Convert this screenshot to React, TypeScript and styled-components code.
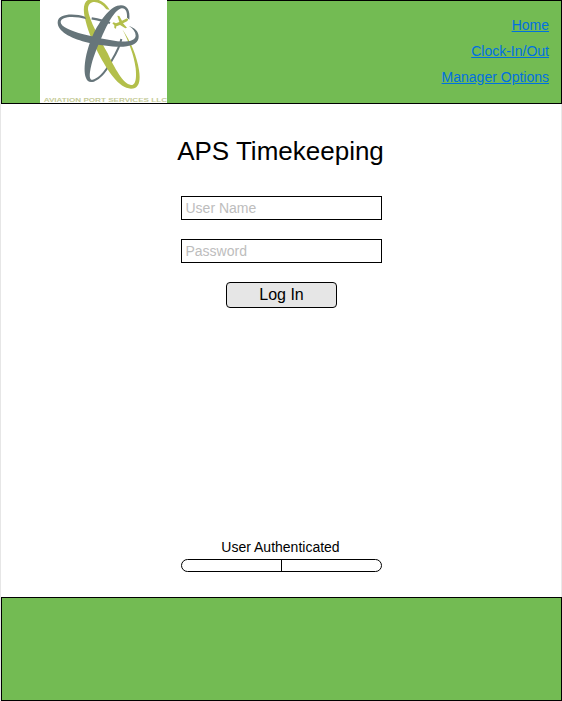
import React from "react";
import styled, { createGlobalStyle } from "styled-components";

const GlobalStyle = createGlobalStyle`
  * { box-sizing: border-box; }
  body {
    margin: 0;
    background: #fff;
    font-family: "Liberation Sans", Arial, sans-serif;
    color: #000;
    overflow: hidden;
  }
`;

const Page = styled.div`
  width: 562px;
  height: 701px;
  display: flex;
  flex-direction: column;
  border-left: 1px solid #e6e6e6;
`;

const Header = styled.header`
  height: 104px;
  flex: none;
  display: flex;
  justify-content: space-between;
  background: #73bb53;
  border: 1px solid #000;
`;

const LogoBox = styled.svg`
  display: block;
  width: 127px;
  height: 103px;
  margin: -1px 0 0 38px;
  background: #fff;
`;

const Nav = styled.nav`
  display: flex;
  flex-direction: column;
  align-items: flex-end;
  padding: 11px 12px 0 0;
`;

const NavLink = styled.a`
  font-size: 14px;
  line-height: 26px;
  color: #0070e0;
  text-decoration: underline;
`;

const Main = styled.main`
  flex: 1;
  display: flex;
  flex-direction: column;
  align-items: center;
  border-right: 1px solid #e9e9e9;
`;

const Title = styled.h1`
  margin: 32px 1px 0 0;
  font-size: 26px;
  line-height: 30px;
  font-weight: 400;
`;

const LoginForm = styled.form`
  display: flex;
  flex-direction: column;
  align-items: center;
  gap: 19px;
  margin: 30px 0 0 1px;
`;

const Field = styled.input`
  display: block;
  width: 201px;
  height: 24px;
  padding: 0 3.5px;
  border: 1px solid #000;
  border-radius: 0;
  background: #fff;
  font: 14px "Liberation Sans", Arial, sans-serif;
  outline: none;
  &::placeholder { color: #bdbdbd; opacity: 1; }
`;

const LoginButton = styled.button`
  width: 111px;
  height: 26px;
  padding: 0;
  border: 1px solid #000;
  border-radius: 4px;
  background: #e6e6e6;
  color: #000;
  font: 16px "Liberation Sans", Arial, sans-serif;
`;

const Status = styled.div`
  margin: auto 0 25px 1px;
  display: flex;
  flex-direction: column;
  align-items: center;
`;

const StatusText = styled.div`
  font-size: 14px;
  line-height: 16px;
  margin: 0 2px 4px 0;
`;

const Meter = styled.div`
  display: flex;
  width: 201px;
  height: 13px;
  border: 1px solid #000;
  border-radius: 7px;
`;

const MeterHalf = styled.div<{ $divided?: boolean }>`
  width: ${(p) => (p.$divided ? 100 : 99)}px;
  border-left: ${(p) => (p.$divided ? "1px solid #000" : "none")};
`;

const Footer = styled.footer`
  height: 104px;
  flex: none;
  background: #73bb53;
  border: 1px solid #000;
`;

function Logo() {
  return (
    <LogoBox viewBox="30 0 381 309" role="img" aria-label="Aviation Port Services LLC">
      {/* far side of the upright orbit, behind the green one */}
      <path
        fill="none"
        stroke="#66757a"
        strokeWidth="6"
        d="M184 243C203 241 226 217 244 184C259 159 270 139 274 117"
      />
      <path
        fill="#b3bf4b"
        d="M239 29C224 5 205 -5 183 -3C162 -1 158 23 164 51C171 83 183 117 205 160C232 211 267 266 303 266C328 266 332 242 327 210C321 170 302 124 277 88C296 124 312 166 317 205C320 235 317 256 303 255C280 253 253 203 233 160C209 115 177 60 174 29C173 -1 207 -1 229 28Z"
      />
      <path
        fill="#66757a"
        d="M165 50C138 41 84 38 83 67C82 93 121 115 166 126C213 137 249 141 280 140C311 138 327 127 326 108C325 93 315 84 296 77C310 86 317 95 317 107C316 123 293 126 262 124C225 119 195 112 160 103C121 92 92 80 92 66C92 48 135 47 168 57Z"
      />
      <path fill="none" stroke="#66757a" strokeWidth="7" d="M185 55C202 58 222 62 240 69" />
      <path
        fill="#66757a"
        d="M298 59C301 32 292 16 273 16C243 16 214 57 193 96C170 143 157 205 168 234C172 246 182 249 195 243L190 239C180 243 178 231 180 216C184 188 196 154 209 126C224 91 250 30 275 25C288 24 292 38 291 53Z"
      />
      <path
        fill="#b3bf4b"
        stroke="#fff"
        strokeWidth="2"
        paintOrder="stroke"
        d="M262 47L268 48L276 62L288 56C295 54 296 60 291 64L279 70L291 83L286 85L270 75L259 79L258 86L253 84L253 76L247 70L251 67L258 70L268 66Z"
      />
      <text
        x="41"
        y="305"
        textLength="370"
        lengthAdjust="spacingAndGlyphs"
        fontFamily="Liberation Sans, Arial, sans-serif"
        fontSize="17"
        fontWeight="700"
        fill="#c5cb98"
      >
        AVIATION PORT SERVICES LLC
      </text>
    </LogoBox>
  );
}

export default function App() {
  return (
    <>
      <GlobalStyle />
      <Page>
        <Header>
          <Logo />
          <Nav>
            <NavLink href="#home">Home</NavLink>
            <NavLink href="#clock">Clock-In/Out</NavLink>
            <NavLink href="#manager">Manager Options</NavLink>
          </Nav>
        </Header>
        <Main>
          <Title>APS Timekeeping</Title>
          <LoginForm>
            <Field type="text" placeholder="User Name" />
            <Field type="password" placeholder="Password" />
            <LoginButton type="button">Log In</LoginButton>
          </LoginForm>
          <Status>
            <StatusText>User Authenticated</StatusText>
            <Meter>
              <MeterHalf />
              <MeterHalf $divided />
            </Meter>
          </Status>
        </Main>
        <Footer />
      </Page>
    </>
  );
}
